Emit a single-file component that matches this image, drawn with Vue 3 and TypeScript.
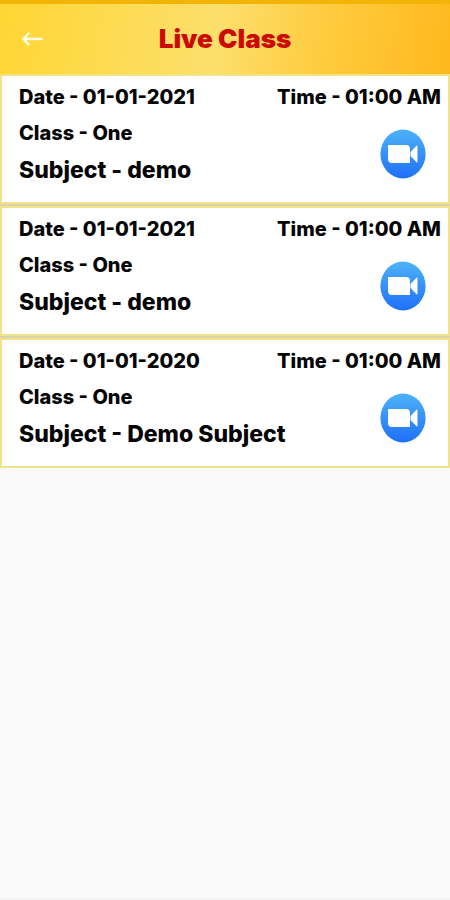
<script setup lang="ts">
interface LiveClass {
  id: number
  date: string
  time: string
  className: string
  subject: string
}

const classes: LiveClass[] = [
  { id: 1, date: '01-01-2021', time: '01:00 AM', className: 'One', subject: 'demo' },
  { id: 2, date: '01-01-2021', time: '01:00 AM', className: 'One', subject: 'demo' },
  { id: 3, date: '01-01-2020', time: '01:00 AM', className: 'One', subject: 'Demo Subject' },
]
</script>

<template>
  <div class="screen">
    <header class="bar">
      <button class="back" type="button" aria-label="Back">
        <svg viewBox="0 0 22 16" width="22" height="16" aria-hidden="true">
          <path d="M20.500 8H2.500M7.500 2.500L2.500 8L7.500 13.500" fill="none" stroke="#fffdf0" stroke-width="2.4" stroke-linecap="round" stroke-linejoin="round" />
        </svg>
      </button>
      <h1 class="title">Live Class</h1>
    </header>

    <main class="list">
      <article v-for="item in classes" :key="item.id" class="card">
        <div class="row">
          <span>Date - {{ item.date }}</span>
          <span>Time - {{ item.time }}</span>
        </div>
        <div class="body">
          <div class="details">
            <p class="line">Class - {{ item.className }}</p>
            <p class="subject">Subject - {{ item.subject }}</p>
          </div>
          <button class="join" type="button" aria-label="Join video class">
            <svg viewBox="0 0 46 50" width="46" height="50" aria-hidden="true">
              <defs>
                <linearGradient :id="`sky-${item.id}`" x1="0" y1="0" x2="0" y2="1">
                  <stop offset="0" stop-color="#4db2f7" />
                  <stop offset="1" stop-color="#1f70fa" />
                </linearGradient>
              </defs>
              <ellipse cx="23" cy="25" rx="22.6" ry="24.4" :fill="`url(#sky-${item.id})`" />
              <path d="M9 16H26Q30 16 30 20V34H12Q8 34 8 30V17Q8 16 9 16ZM30.500 23L36 17.200Q37.500 15.500 37.500 17.500V32.500Q37.500 34.500 36 32.800L30.500 27Z" fill="#fff" />
            </svg>
          </button>
        </div>
      </article>
    </main>
  </div>
</template>

<style>
body {
  margin: 0;
  background: #fafafa;
}
</style>

<style scoped>
.screen {
  display: flex;
  flex-direction: column;
  box-sizing: border-box;
  min-height: 100vh;
  border-bottom: 2px solid #f4f4f4;
  background: #fafafa;
  color: #050505;
  font-family: Inter, "Liberation Sans", sans-serif;
  font-weight: 800;
}

.bar {
  display: grid;
  grid-template-columns: 64px 1fr 64px;
  align-items: center;
  box-sizing: border-box;
  height: 74px;
  border-top: 4px solid #f2b406;
  background: linear-gradient(100deg, #ffd633 0%, #fcdf6c 48%, #ffcb3e 72%, #ffb81c 100%);
}

.back,
.join {
  display: flex;
  padding: 0;
  border: 0;
  background: none;
  cursor: pointer;
}

.back {
  justify-self: center;
}

.title {
  margin: 0;
  color: #cc0a05;
  font-size: 26px;
  font-weight: 900;
  line-height: 32px;
  text-align: center;
}

.list {
  display: flex;
  flex-direction: column;
  gap: 2px;
  background: #ddd3aa;
}

.card {
  box-sizing: border-box;
  padding: 8px 7px 17px 17px;
  border: 2px solid #f1e389;
  background: #fff;
}

.row {
  display: flex;
  justify-content: space-between;
  font-size: 20px;
  line-height: 26px;
}

.body {
  display: flex;
  justify-content: space-between;
  padding: 10px 15px 0 0;
}

.line,
.subject {
  margin: 0;
}

.line {
  font-size: 20px;
  line-height: 26px;
}

.subject {
  margin-top: 9px;
  font-size: 23px;
  line-height: 30px;
}

.join {
  align-self: flex-start;
  margin-top: 9px;
}
</style>
